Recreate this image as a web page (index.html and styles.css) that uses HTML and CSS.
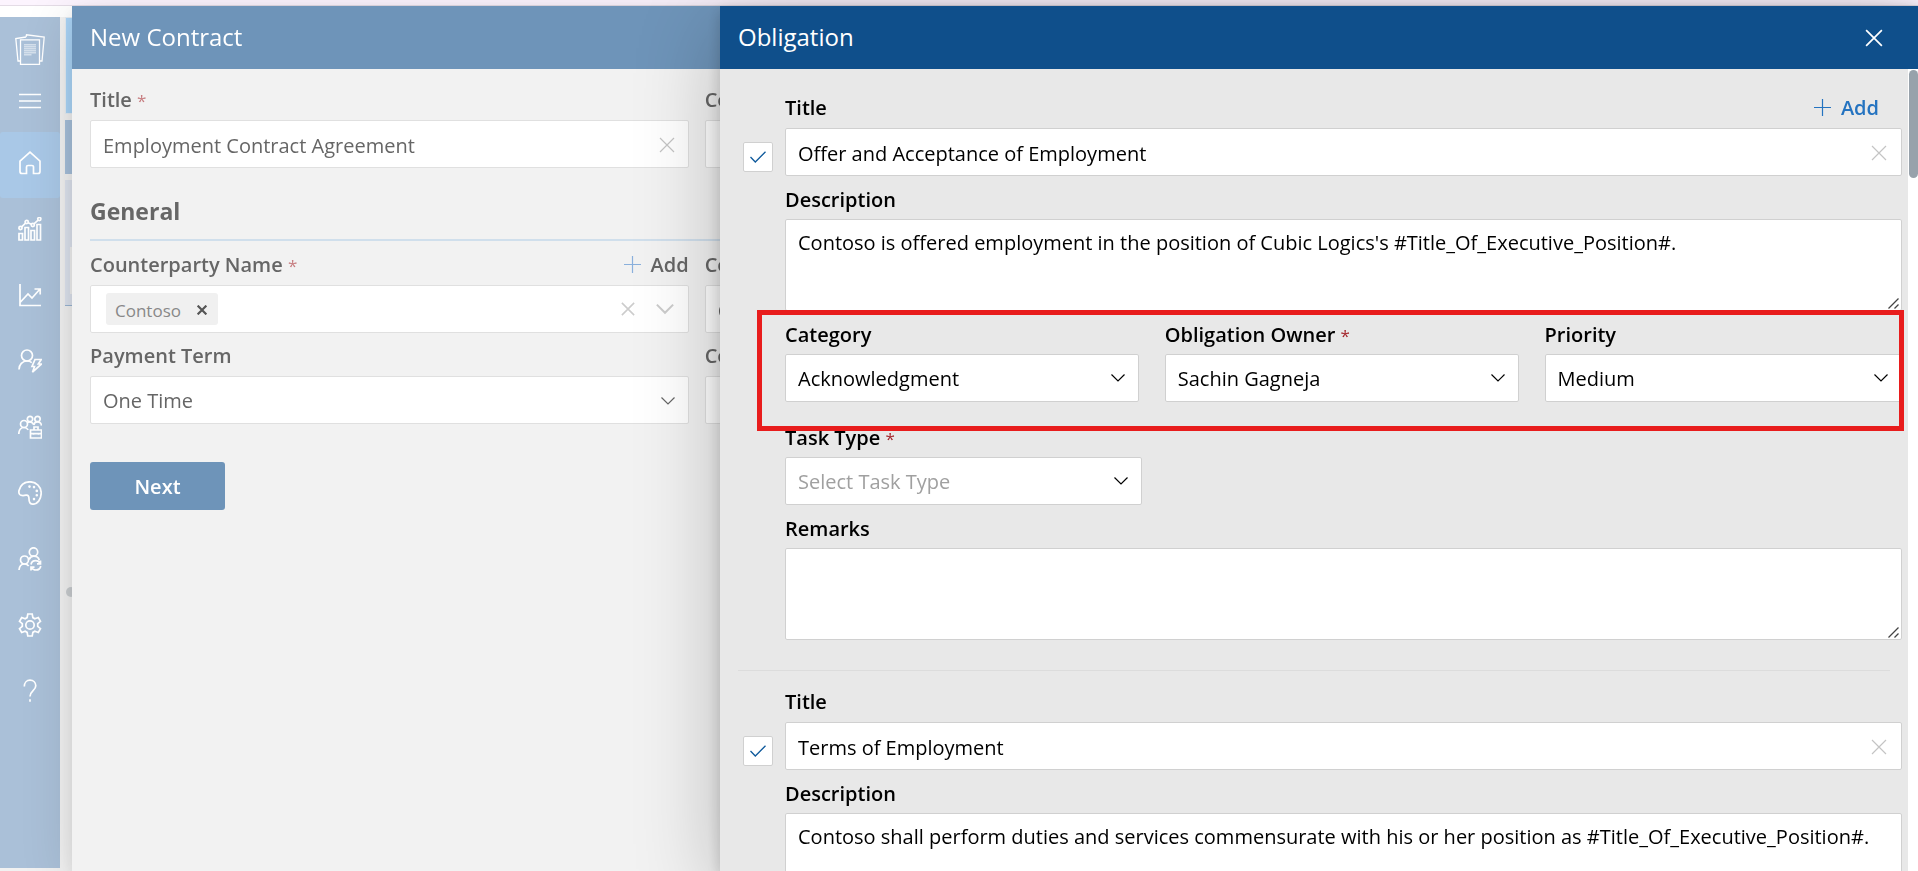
FILE: index.html
```html
<!DOCTYPE html>
<html lang="en">
<head>
<meta charset="utf-8">
<title>New Contract</title>
<link rel="stylesheet" href="styles.css">
</head>
<body>
<svg class="sprite" aria-hidden="true">
  <symbol id="chevron" viewBox="0 0 16 16"><path d="M1.500 4.500 8 11l6.500-6.500"/></symbol>
  <symbol id="cross" viewBox="0 0 16 16"><path d="M1 1l14 14M15 1 1 15"/></symbol>
  <symbol id="plus" viewBox="0 0 17 17"><path d="M8.500 0v17M0 8.500h17"/></symbol>
</svg>

<div class="page">
  <nav class="sidebar" aria-label="Main">
    <a class="brand" href="#" aria-label="Contracts">
      <svg viewBox="0 0 30 32"><path d="M5 27H3L.800 4.500 11 3M11 3l.500-2.200L29.200 3 27 27h-2"/><path d="M5.500 5.800h19v24.500h-19z"/><path class="faint" d="M9 10h12v1.500H9zM9 12h12v1.500H9zM9 14h12v1.500H9zM9 16h12v1.500H9zM9 18h12v1.500H9zM9 20h7.500v1.500H9z"/></svg>
    </a>
    <button class="burger" type="button" aria-label="Menu">
      <svg viewBox="0 0 22 16"><path d="M0 1.500h22M0 8h22M0 14.500h22"/></svg>
    </button>
    <a class="nav-item active" href="#" aria-label="Home"><svg viewBox="0 0 24 24"><path d="M2 10.200 12 1.200l10 9V20.500a2 2 0 0 1-2 2h-4.500V16a1.500 1.500 0 0 0-1.500-1.500h-4A1.500 1.500 0 0 0 8.500 16v6.500H4a2 2 0 0 1-2-2z"/></svg></a>
    <a class="nav-item" href="#" aria-label="Reports"><svg viewBox="0 0 24 24"><path d="M1 16.500h3.500V23H1zM7 10.500h3.500V23H7zM13 13.500h3.500V23H13zM19 7.500h3.500V23H19z"/><circle cx="2.500" cy="11" r="1.600"/><circle cx="8.700" cy="5" r="1.600"/><circle cx="14.800" cy="8" r="1.600"/><circle cx="21.300" cy="2" r="1.600"/><path d="M3.700 9.900 7.500 6.100M10.200 5.800l3.100 1.500M16 6.900l4.100-3.800"/></svg></a>
    <a class="nav-item" href="#" aria-label="Trends"><svg viewBox="0 0 24 24"><path d="M2 1v21.500h21M2.500 19 10 11l4 4 8-9M16.500 6H22.200v5.500"/></svg></a>
    <a class="nav-item" href="#" aria-label="Approvals"><svg viewBox="0 0 24 24"><circle cx="9" cy="6.500" r="5.500"/><path d="M1 20.500c0-5 3.500-8.500 8-8.500 2 0 3.500.600 4.800 1.600"/><path d="m17 10.500-3 7h2.500l-2 5.700 9-8.200h-3.200l3-4.500z"/></svg></a>
    <a class="nav-item" href="#" aria-label="Teams"><svg viewBox="0 0 24 24"><circle cx="6" cy="9" r="3.500"/><path d="M.800 19c0-4 2.200-6.500 5.200-6.500 1.800 0 3.300.900 4.200 2.400"/><circle cx="12" cy="4" r="2.700"/><path d="M9.500 7.500c2.500-1.300 5-.500 6.300 2.500"/><circle cx="19.500" cy="4" r="2.700"/><path d="M15.800 10c.700-4 6.900-4.300 7.700.500"/><path d="M12.500 15h11v8h-11zM16 15v-3h4v3M12.500 18.700h11M15.500 18v1.800M20.500 18v1.800"/></svg></a>
    <a class="nav-item" href="#" aria-label="Theme"><svg viewBox="0 0 24 24"><path d="M1 9.500C2.500 3.500 7 .800 12 .800c6.300 0 11.200 5 11.200 11 0 7-4 11.400-8.200 11.400-3.500 0-4-2.500-4-5.200 0-2.500-.700-4.200-3-3.800-2.500.500-4.800.800-6.300-.700C.800 12.500.700 11 1 9.500z"/><path class="dots" d="M11.500 5.500v.1M16 6v.1M18.800 9.800v.1M18.800 14.200v.1M16 18v.1"/></svg></a>
    <a class="nav-item" href="#" aria-label="Delegates"><svg viewBox="0 0 24 24"><circle cx="15.500" cy="5" r="4.200"/><path d="M11 12.500c1.200-2.400 2.800-3.300 4.700-3.300 3 0 5 1.800 5.600 4"/><circle cx="6.500" cy="13" r="4"/><path d="M1 23c.300-3.600 2.500-6 5.500-6 1.800 0 3.200.700 4.200 2M13 17.500c.500-2.500 2.500-3.800 4.700-3.800 2 0 3.500 1 4.300 2.600M22.500 13.500v3.300H19M22.800 19c-.500 2.500-2.500 4-4.800 4-2 0-3.600-1-4.500-2.700M13 23.500v-3.300h3.500"/></svg></a>
    <a class="nav-item" href="#" aria-label="Settings"><svg viewBox="0 0 24 24"><circle cx="12" cy="12" r="4.200"/><path d="M9.800 1h4.400l.7 3.600 1.900 1.100 3.500-1.200 2.200 3.800L19.700 10.700v2.600l2.800 2.400-2.200 3.800-3.500-1.200-1.900 1.100-.7 3.600H9.800l-.7-3.600-1.900-1.100-3.500 1.200-2.200-3.800 2.800-2.400v-2.600L1.500 8.300l2.200-3.800 3.500 1.200 1.900-1.100z"/></svg></a>
    <a class="nav-item" href="#" aria-label="Help"><svg viewBox="0 0 24 24"><path d="M6.300 7.500c0-3.700 2.400-6.300 5.700-6.300 3.400 0 5.800 2.300 5.800 5.600 0 4.700-5.800 5.200-5.800 10.700M12 20.300v2.400"/></svg></a>
  </nav>
  <div class="dashboard">
    <div class="tile tile-sky"></div>
    <div class="tile tile-steel"></div>
    <div class="tile tile-pale"><div class="tile-inner"></div></div>
    <div class="tile-grip"></div>
  </div>
</div>

<section class="drawer contract" aria-labelledby="contract-heading">
  <header class="drawer-head"><h1 id="contract-heading">New Contract</h1></header>
  <form class="contract-form">
    <div class="grid">
      <div class="field">
        <div class="label-row"><label for="c-title">Title <span class="req">*</span></label></div>
        <div class="control"><input id="c-title" type="text" value="Employment Contract Agreement"><svg class="icon clear"><use href="#cross"/></svg></div>
      </div>
      <div class="field">
        <div class="label-row"><label for="c-2">Co</label></div>
        <div class="control"><input id="c-2" type="text"></div>
      </div>
    </div>
    <h2>General</h2>
    <div class="grid">
      <div class="field">
        <div class="label-row"><label for="c-party">Counterparty Name <span class="req">*</span></label>
          <button class="add" type="button"><svg class="icon"><use href="#plus"/></svg>Add</button></div>
        <div class="control picker">
          <span class="chip">Contoso <button type="button" aria-label="Remove Contoso"><svg class="icon"><use href="#cross"/></svg></button></span>
          <input id="c-party" type="text">
          <svg class="icon pale"><use href="#cross"/></svg><svg class="icon pale wide"><use href="#chevron"/></svg>
        </div>
      </div>
      <div class="field">
        <div class="label-row"><label for="c-3">Co</label></div>
        <div class="control"><input id="c-3" type="text" value="C"></div>
      </div>
      <div class="field">
        <div class="label-row"><label for="c-term">Payment Term</label></div>
        <div class="control"><select id="c-term"><option>One Time</option></select><svg class="icon arrow"><use href="#chevron"/></svg></div>
      </div>
      <div class="field">
        <div class="label-row"><label for="c-4">Co</label></div>
        <div class="control"><input id="c-4" type="text"></div>
      </div>
    </div>
    <button class="next" type="button">Next</button>
  </form>
</section>

<section class="drawer obligation" aria-labelledby="obligation-heading">
  <header class="drawer-head"><h1 id="obligation-heading">Obligation</h1>
    <button class="close" type="button" aria-label="Close"><svg class="icon"><use href="#cross"/></svg></button></header>
  <div class="scroller">
    <form class="list">
      <div class="item">
        <input class="check" type="checkbox" checked aria-label="Offer and Acceptance of Employment">
        <div class="fields">
          <div class="field lead">
            <div class="label-row"><label for="o1-title">Title</label>
              <button class="add" type="button"><svg class="icon"><use href="#plus"/></svg>Add</button></div>
            <div class="control"><input id="o1-title" type="text" value="Offer and Acceptance of Employment"><svg class="icon clear"><use href="#cross"/></svg></div>
          </div>
          <div class="field">
            <div class="label-row"><label for="o1-desc">Description</label></div>
            <textarea id="o1-desc">Contoso is offered employment in the position of Cubic Logics's #Title_Of_Executive_Position#.</textarea>
          </div>
          <div class="trio">
            <div class="field">
              <div class="label-row"><label for="o1-cat">Category</label></div>
              <div class="control"><select id="o1-cat"><option>Acknowledgment</option></select><svg class="icon arrow"><use href="#chevron"/></svg></div>
            </div>
            <div class="field">
              <div class="label-row"><label for="o1-owner">Obligation Owner <span class="req">*</span></label></div>
              <div class="control"><select id="o1-owner"><option>Sachin Gagneja</option></select><svg class="icon arrow"><use href="#chevron"/></svg></div>
            </div>
            <div class="field">
              <div class="label-row"><label for="o1-prio">Priority</label></div>
              <div class="control"><select id="o1-prio"><option>Medium</option></select><svg class="icon arrow"><use href="#chevron"/></svg></div>
            </div>
            <div class="highlight"></div>
          </div>
          <div class="field task">
            <div class="label-row"><label for="o1-task">Task Type <span class="req">*</span></label></div>
            <div class="control"><select id="o1-task" class="empty"><option>Select Task Type</option></select><svg class="icon arrow"><use href="#chevron"/></svg></div>
          </div>
          <div class="field">
            <div class="label-row"><label for="o1-rem">Remarks</label></div>
            <textarea id="o1-rem"></textarea>
          </div>
        </div>
      </div>
      <hr>
      <div class="item">
        <input class="check" type="checkbox" checked aria-label="Terms of Employment">
        <div class="fields">
          <div class="field lead">
            <div class="label-row"><label for="o2-title">Title</label></div>
            <div class="control"><input id="o2-title" type="text" value="Terms of Employment"><svg class="icon clear"><use href="#cross"/></svg></div>
          </div>
          <div class="field">
            <div class="label-row"><label for="o2-desc">Description</label></div>
            <textarea id="o2-desc">Contoso shall perform duties and services commensurate with his or her position as #Title_Of_Executive_Position#.</textarea>
          </div>
        </div>
      </div>
    </form>
    <div class="scrollbar"><div class="thumb"></div></div>
  </div>
</section>
</body>
</html>
```
FILE: styles.css
```css
* { box-sizing: border-box; }

body {
  margin: 0;
  height: 100vh;
  overflow: hidden;
  background: #fff;
  color: #000;
  font: 20px/27px "Open Sans", "Noto Sans", sans-serif;
}

h1, h2 { margin: 0; }
button, input, select, textarea { font: inherit; color: inherit; }
button { padding: 0; border: 0; background: none; }
.sprite { display: none; }

.icon {
  width: 16px;
  height: 16px;
  flex: none;
  overflow: visible;
  fill: none;
  stroke: currentColor;
  stroke-width: 1.2;
}

/* Page behind the drawers */
.page {
  display: flex;
  gap: 5px;
  height: 100%;
  padding: 12px 0 3px;
  border-top: 5px solid #fcf4fe;
  background: linear-gradient(#e4dce6 1px, #fff 1px, #fff 12px, #f1f1f1 12px);
}

.sidebar {
  display: flex;
  flex-direction: column;
  width: 60px;
  background: #aac0d8;
}
.sidebar svg {
  width: 24px;
  height: 24px;
  fill: none;
  stroke: #fff;
  stroke-width: 1.7;
}
.sidebar .brand { display: flex; justify-content: center; padding-top: 17px; }
.sidebar .brand svg { width: 30px; height: 32px; stroke-width: 1.3; }
.sidebar .faint { fill: #fff; fill-opacity: .5; stroke: none; }
.sidebar .dots { stroke-width: 2.6; stroke-linecap: round; }
.burger {
  display: flex;
  align-items: center;
  justify-content: center;
  height: 66px;
  padding-top: 3px;
}
.sidebar .burger svg { width: 22px; height: 16px; }
.nav-item {
  display: flex;
  align-items: center;
  justify-content: center;
  height: 66px;
  padding-bottom: 4px;
}
.nav-item.active { border-radius: 3px; background: #a9c8e7; }

.dashboard { flex: 1; display: flex; flex-direction: column; gap: 6px; overflow: hidden; }
.dashboard > div { flex: none; }
.tile-sky { height: 97px; background: #abd5f8; border: 1px solid #e4ecf3; }
.tile-steel { height: 54px; background: #a6bfda; }
.tile-pale { height: 126px; padding: 67px 5px 0; background: #dde3ee; border-bottom: 1px solid #9ab5d2; }
.tile-inner { height: 47px; background: #f1f1f1; }
.tile-grip { width: 10px; height: 10px; margin: 275px 1px; border-radius: 5px; background: #c9cdd0; }

/* Drawers */
.drawer {
  position: fixed;
  top: 6px;
  right: 0;
  bottom: 0;
  display: flex;
  flex-direction: column;
  box-shadow: 0 20px 80px rgba(0, 0, 0, .24), 0 5px 14px rgba(0, 0, 0, .18);
}
.drawer-head {
  display: flex;
  flex: none;
  align-items: center;
  justify-content: space-between;
  height: 63px;
  padding: 0 35px 2px 18px;
  color: #fff;
}
.drawer-head h1 { font-size: 24px; line-height: 32px; font-weight: 400; }
.close { padding-top: 2px; }
.close .icon { display: block; width: 18px; height: 18px; stroke-width: 1.5; }

.contract { left: 72px; background: #f2f2f2; color: #666; box-shadow: 0 10px 50px rgba(0, 0, 0, .14), 0 5px 14px rgba(0, 0, 0, .08); }
.contract .drawer-head { background: #6e94b9; }
.obligation { left: 720px; background: #e8e8e8; }
.obligation .drawer-head { background: #0f4f8b; }

/* Fields */
.label-row { display: flex; align-items: center; justify-content: space-between; height: 27px; margin-bottom: 6px; }
label { font-weight: 600; }
.req { color: #a4262c; font-size: 17px; font-weight: 400; }
.contract .req { color: #c77d80; }
.add { display: flex; align-items: center; gap: 10px; font-weight: 600; }
.add .icon { width: 17px; height: 17px; }
.control { position: relative; }
.control > input, .control > select, .picker, textarea {
  display: block;
  width: 100%;
  height: 48px;
  margin: 0;
  padding: 2px 40px 0 12px;
  border: 1px solid #d0d0d0;
  border-radius: 2px;
  background: #fff;
  appearance: none;
  outline: 0;
}
.control > select { padding-top: 0; }
textarea { height: 92px; padding: 9px 12px; resize: vertical; overflow: hidden; }
textarea::-webkit-resizer {
  background: url("data:image/svg+xml,%3Csvg xmlns='http://www.w3.org/2000/svg' viewBox='0 0 15 15'%3E%3Cpath d='M2.500 13.500l10-10M8.500 13.500l4-4' fill='none' stroke='%23444' stroke-width='1.300'/%3E%3C/svg%3E") center / 15px 15px no-repeat;
}
select.empty { color: #a0a0a0; }
.control .clear, .control .arrow { position: absolute; top: 17px; right: 14px; pointer-events: none; }
.control .clear { color: #c4c4c4; }
.control .arrow { right: 13px; }
.obligation .control .clear { right: 15px; }
.obligation .control .arrow { top: 16px; }

/* Contract form */
.contract-form { padding: 17px 0 0 18px; }
.grid { display: grid; grid-template-columns: repeat(3, 1fr); gap: 10px 16px; }
.grid .field:nth-child(odd) { grid-column: 1; }
.contract .grid:first-child .label-row { margin-bottom: 7px; }
.contract .control > input, .contract .control > select, .contract .picker { border-color: #e0e0e0; }
.contract h2 { margin: 28px 0 10px; padding-bottom: 12px; border-bottom: 2px solid #d0dfec; font-size: 23px; line-height: 31px; font-weight: 700; }
.contract h2 + .grid .label-row { margin-bottom: 7px; }
.contract h2 + .grid { row-gap: 9px; }
.contract .add .icon { color: #8ab0dc; }
.contract .picker { display: flex; align-items: center; padding: 0 13px 0 15px; }
.contract .picker > input { flex: 1; width: 0; height: 30px; border: 0; padding: 0; }
.chip { display: flex; align-items: center; gap: 16px; height: 32px; padding: 2px 11px 0 9px; border-radius: 3px; background: #f0f0f0; color: #888; font-size: 17px; }
.chip .icon { display: block; width: 10px; height: 10px; color: #555; stroke-width: 3.500; }
.pale { color: #ccc; }
.picker > .pale { width: 14px; height: 14px; stroke-width: 1.8; }
.picker > .pale.wide { width: 20px; height: 20px; margin-left: 20px; stroke-width: 1.6; }
.next {
  display: block;
  width: 135px;
  height: 48px;
  margin-top: 38px;
  border-radius: 3px;
  background: #6e94b9;
  color: #fff;
  font-weight: 600;
}

/* Obligation list */
.scroller { flex: 1; display: flex; min-height: 0; }
.list { flex: 1; padding: 8px 6px 0 18px; overflow: hidden; }
.list hr { height: 1px; margin: 30px 12px 0 0; border: 0; background: #dcdcdc; }
.item { display: grid; grid-template-columns: 42px 1fr; padding: 17px 0 0 5px; }
.fields { display: grid; gap: 10px; }
.lead .label-row { margin-bottom: 7px; }
.obligation .add { margin-right: 23px; color: #2473c0; }
.check {
  width: 30px;
  height: 30px;
  margin: 48px 0 0;
  border: 1px solid #d0d0d0;
  border-radius: 2px;
  appearance: none;
  background: #fff url("data:image/svg+xml,%3Csvg xmlns='http://www.w3.org/2000/svg' viewBox='0 0 16 12'%3E%3Cpath d='M.5 6l4.800 5L15.500.800' fill='none' stroke='%230f5a9c' stroke-width='1.300'/%3E%3C/svg%3E") center / 16px 12px no-repeat;
}
.trio { position: relative; display: grid; grid-template-columns: 34% 34% 32%; margin-bottom: 12px; }
.trio .field { padding-right: 26px; }
.trio .field:nth-child(3) { padding-right: 0; }
.highlight { position: absolute; inset: -11px -2px -29px -28px; border: 5px solid #e81c1c; pointer-events: none; }
.task { width: 32%; }
.scrollbar { flex: none; width: 10px; padding: 1px 0 0 1px; background: #fff; }
.thumb { height: 108px; border-radius: 5px; background: #98a2ab; }
```
